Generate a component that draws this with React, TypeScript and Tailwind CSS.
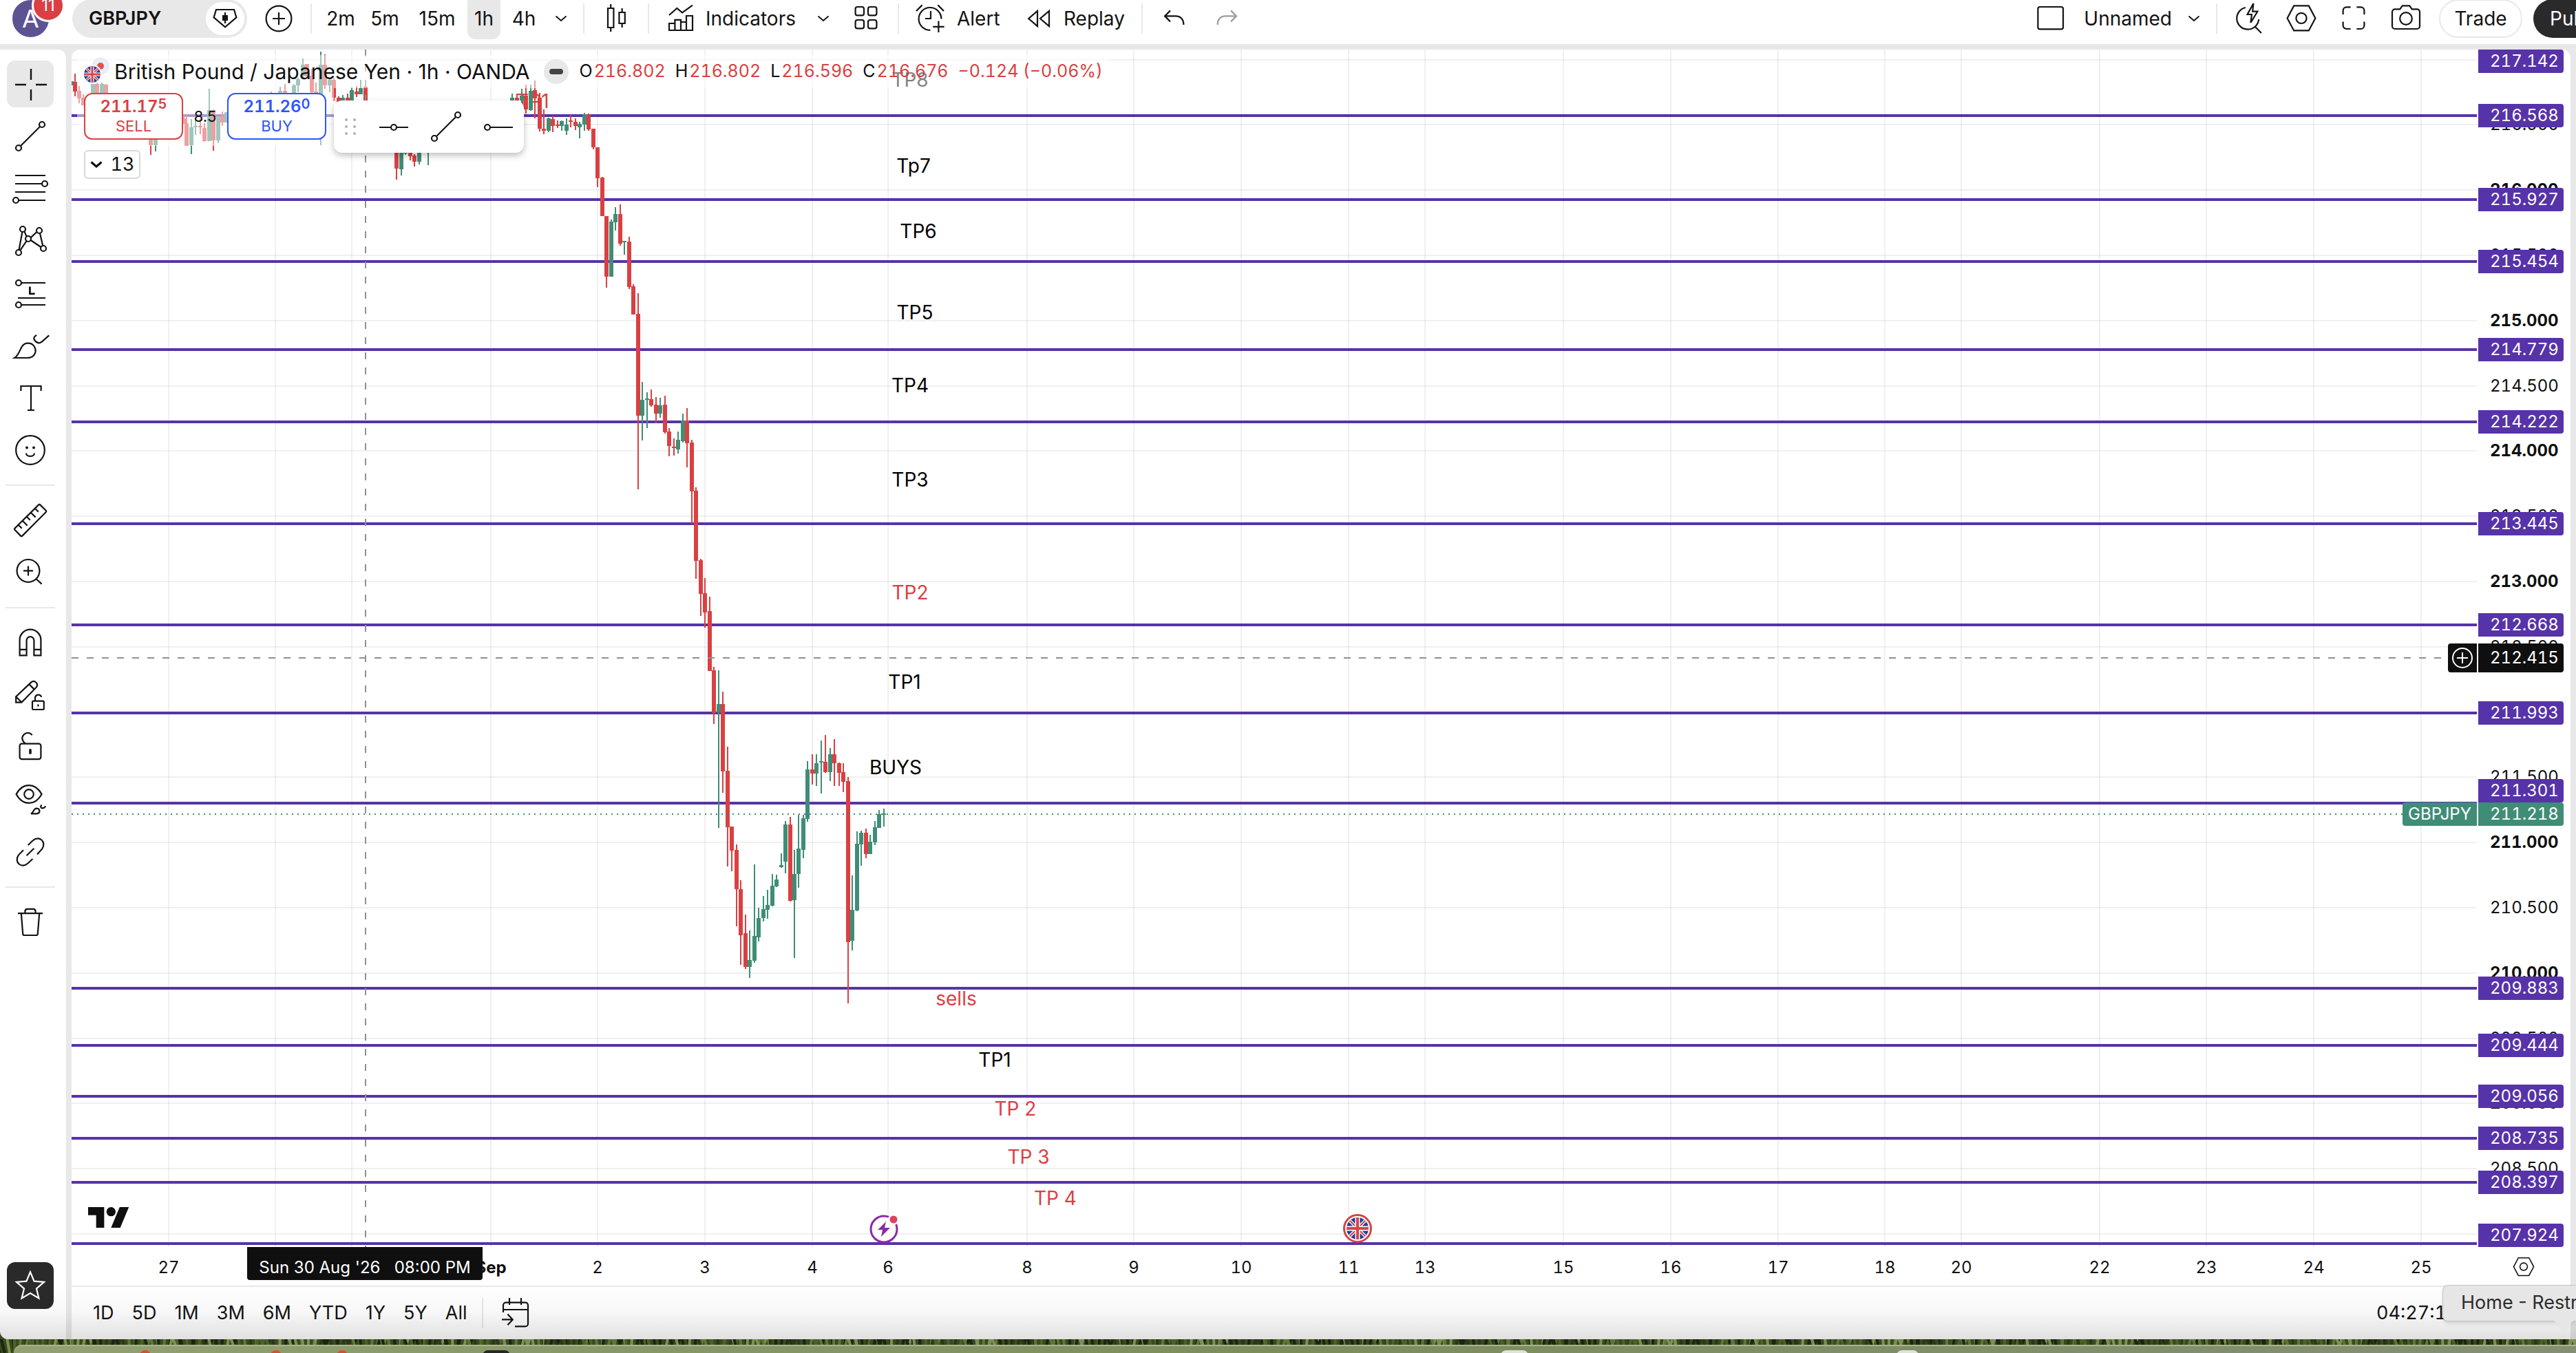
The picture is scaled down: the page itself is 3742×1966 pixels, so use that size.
import React from "react";

type Candle = [x: number, high: number, top: number, bottom: number, low: number, up: 0 | 1];

const PANE_LEFT = 104;
const PANE_TOP = 72;

const priceToY = (price: number) => Math.floor(87 + (217 - price) * 189.6);

const CANDLES: Candle[] = [
  [104, 118, 118, 124, 124, 1], [109, 107, 119, 133, 140, 0], [115, 125, 132, 143, 150, 0], [121, 137, 142, 153, 153, 0],
  [135, 122, 122, 140, 146, 1], [141, 120, 122, 140, 146, 0], [148, 120, 122, 140, 146, 1], [154, 122, 123, 140, 146, 0],
  [219, 190, 190, 211, 225, 0], [226, 190, 190, 211, 220, 1], [267, 168, 172, 180, 180, 0], [271, 168, 179, 212, 212, 0],
  [278, 173, 185, 211, 224, 1], [284, 172, 183, 185, 196, 1], [291, 172, 183, 185, 195, 0], [297, 179, 186, 205, 206, 0],
  [304, 129, 160, 205, 205, 1], [310, 159, 160, 204, 219, 0], [317, 169, 169, 204, 208, 1], [323, 162, 169, 178, 183, 0],
  [329, 163, 163, 178, 178, 1], [394, 133, 138, 142, 142, 0], [407, 126, 132, 142, 142, 1], [414, 122, 132, 142, 142, 0],
  [427, 122, 124, 140, 140, 1], [433, 113, 115, 124, 134, 1], [440, 85, 94, 111, 115, 1], [446, 93, 93, 111, 111, 0],
  [453, 100, 110, 134, 136, 0], [459, 120, 133, 140, 140, 0], [466, 75, 94, 137, 211, 1], [472, 79, 94, 124, 129, 0],
  [479, 113, 116, 124, 134, 1], [485, 114, 116, 142, 147, 0], [492, 140, 142, 148, 148, 0], [498, 138, 142, 148, 148, 1],
  [505, 136, 142, 148, 148, 0], [511, 127, 131, 148, 148, 1], [518, 125, 133, 137, 141, 0], [524, 116, 128, 137, 137, 1],
  [531, 121, 126, 150, 150, 0], [576, 210, 210, 245, 261, 0], [583, 210, 210, 246, 255, 1], [589, 210, 210, 223, 225, 1],
  [596, 210, 210, 227, 233, 0], [602, 224, 226, 235, 242, 0], [609, 210, 210, 235, 239, 1], [622, 210, 210, 212, 240, 1],
  [744, 136, 142, 146, 146, 1], [751, 136, 142, 146, 146, 0], [758, 129, 139, 146, 150, 1], [764, 123, 139, 159, 165, 0],
  [771, 123, 132, 160, 161, 1], [777, 117, 131, 143, 172, 0], [784, 135, 142, 187, 191, 0], [790, 159, 187, 190, 195, 0],
  [797, 171, 172, 190, 192, 1], [803, 168, 173, 183, 192, 0], [810, 175, 181, 183, 186, 0], [816, 175, 176, 183, 190, 1],
  [823, 172, 181, 190, 196, 1], [829, 167, 175, 177, 185, 0], [836, 172, 177, 183, 189, 0], [842, 177, 180, 185, 201, 1],
  [849, 164, 166, 181, 190, 1], [855, 165, 166, 188, 190, 0], [862, 187, 187, 214, 217, 0], [868, 214, 214, 259, 272, 0],
  [875, 257, 258, 314, 314, 0], [881, 314, 314, 402, 418, 0], [888, 319, 322, 402, 402, 1], [894, 301, 311, 323, 335, 1],
  [901, 297, 311, 354, 357, 0], [907, 350, 350, 352, 370, 1], [914, 344, 351, 417, 420, 0], [920, 413, 416, 457, 457, 0],
  [927, 426, 456, 604, 711, 0], [933, 555, 581, 604, 640, 1], [940, 570, 579, 581, 622, 1], [946, 566, 580, 589, 591, 0],
  [953, 577, 588, 601, 615, 0], [959, 578, 589, 601, 607, 1], [966, 575, 588, 628, 630, 0], [972, 622, 627, 648, 663, 0],
  [979, 637, 649, 651, 662, 0], [985, 627, 639, 653, 659, 1], [992, 601, 611, 641, 643, 1], [998, 593, 611, 644, 679, 0],
  [1005, 639, 643, 714, 761, 0], [1011, 708, 713, 815, 841, 0], [1018, 812, 814, 863, 895, 0], [1024, 840, 862, 890, 912, 0],
  [1031, 867, 888, 975, 975, 0], [1037, 969, 974, 1036, 1052, 0], [1044, 974, 1023, 1035, 1203, 1], [1050, 1005, 1023, 1121, 1152, 0],
  [1057, 1085, 1120, 1202, 1259, 0], [1063, 1201, 1201, 1236, 1266, 0], [1070, 1227, 1235, 1292, 1346, 0], [1076, 1279, 1292, 1359, 1402, 0],
  [1083, 1329, 1356, 1405, 1408, 0], [1089, 1352, 1395, 1405, 1421, 1], [1096, 1256, 1360, 1396, 1399, 1], [1102, 1319, 1334, 1362, 1368, 1],
  [1109, 1302, 1321, 1334, 1339, 1], [1115, 1293, 1315, 1322, 1335, 1], [1122, 1270, 1287, 1316, 1317, 1], [1128, 1271, 1278, 1288, 1289, 1],
  [1135, 1240, 1257, 1260, 1261, 1], [1141, 1193, 1198, 1252, 1269, 1], [1148, 1187, 1198, 1309, 1310, 0], [1154, 1235, 1270, 1308, 1392, 1],
  [1160, 1184, 1233, 1270, 1290, 1], [1167, 1184, 1189, 1235, 1247, 1], [1173, 1106, 1118, 1190, 1194, 1], [1180, 1096, 1118, 1124, 1140, 0],
  [1186, 1096, 1109, 1124, 1142, 1], [1193, 1076, 1106, 1108, 1153, 1], [1199, 1068, 1107, 1122, 1123, 0], [1206, 1087, 1096, 1122, 1135, 1],
  [1212, 1074, 1096, 1109, 1142, 0], [1219, 1108, 1109, 1123, 1142, 0], [1225, 1109, 1122, 1136, 1151, 0], [1232, 1129, 1135, 1369, 1458, 0],
  [1238, 1272, 1322, 1367, 1381, 1], [1245, 1208, 1226, 1323, 1324, 1], [1251, 1207, 1210, 1227, 1258, 1], [1258, 1204, 1210, 1241, 1247, 0],
  [1264, 1213, 1223, 1241, 1241, 1], [1271, 1193, 1202, 1224, 1228, 1], [1277, 1177, 1183, 1203, 1203, 1], [1284, 1175, 1182, 1184, 1201, 1],
];

const LEVELS = [
  216.568, 215.927, 215.454, 214.779, 214.222, 213.445, 212.668, 211.993, 211.301, 209.883, 209.444, 209.056, 208.735,
  208.397, 207.924,
];

const TICKS = Array.from({ length: 19 }, (_, i) => 217 - i * 0.5);

const NOTES: { x: number; y: number; text: string; red?: boolean }[] = [
  { x: 1322, y: 126, text: "TP8" },
  { x: 774, y: 157, text: "TP1", red: true },
  { x: 1327, y: 251, text: "Tp7" },
  { x: 1334, y: 346, text: "TP6" },
  { x: 1329, y: 464, text: "TP5" },
  { x: 1322, y: 570, text: "TP4" },
  { x: 1322, y: 707, text: "TP3" },
  { x: 1322, y: 871, text: "TP2", red: true },
  { x: 1314, y: 1001, text: "TP1" },
  { x: 1301, y: 1125, text: "BUYS" },
  { x: 1389, y: 1461, text: "sells", red: true },
  { x: 1445, y: 1550, text: "TP1" },
  { x: 1475, y: 1621, text: "TP 2", red: true },
  { x: 1494, y: 1691, text: "TP 3", red: true },
  { x: 1533, y: 1751, text: "TP 4", red: true },
];

const DAYS: { x: number; label: string; bold?: boolean }[] = [
  { x: 245, label: "27" },
  { x: 400, label: "" },
  { x: 511, label: "" },
  { x: 713, label: "Sep", bold: true },
  { x: 868, label: "2" },
  { x: 1024, label: "3" },
  { x: 1180, label: "4" },
  { x: 1290, label: "6" },
  { x: 1492, label: "8" },
  { x: 1647, label: "9" },
  { x: 1803, label: "10" },
  { x: 1959, label: "11" },
  { x: 2070, label: "13" },
  { x: 2271, label: "15" },
  { x: 2427, label: "16" },
  { x: 2583, label: "17" },
  { x: 2738, label: "18" },
  { x: 2849, label: "20" },
  { x: 3050, label: "22" },
  { x: 3205, label: "23" },
  { x: 3361, label: "24" },
  { x: 3517, label: "25" },
];

function Icon({ children, className = "size-14" }: { children: React.ReactNode; className?: string }) {
  return (
    <svg viewBox="0 0 28 28" fill="none" stroke="currentColor" strokeWidth="1.1" aria-hidden className={`shrink-0 ${className}`}>
      {children}
    </svg>
  );
}

function Chevron({ bold = false }: { bold?: boolean }) {
  return (
    <svg viewBox="0 0 20 12" fill="none" stroke="currentColor" strokeWidth={bold ? 3 : 2} aria-hidden className="h-3 w-5 shrink-0">
      <path d="M2.5 2.5 10 9l7.5-6.5" />
    </svg>
  );
}

function Flag({ className }: { className: string }) {
  return (
    <svg viewBox="0 0 24 24" aria-hidden className={className}>
      <clipPath id="flag-round">
        <circle cx="12" cy="12" r="12" />
      </clipPath>
      <g clipPath="url(#flag-round)">
        <path fill="#1f419b" d="M0 0h24v24H0z" />
        <path stroke="#fff" strokeWidth="3.4" d="m0 0 24 24M24 0 0 24" />
        <path stroke="#d8434a" strokeWidth="1.6" d="m0 0 24 24M24 0 0 24" />
        <path stroke="#fff" strokeWidth="5.2" d="M12 0v24M0 12h24" />
        <path stroke="#d8434a" strokeWidth="3" d="M12 0v24M0 12h24" />
      </g>
    </svg>
  );
}

const Hexagon = () => (
  <>
    <path d="M3.8 13.7 8.6 4.7h10.8l4.8 9-4.8 9H8.6z" />
    <circle cx="14" cy="13.7" r="3.8" />
  </>
);

const Separator = () => <div className="h-11 w-0.5 shrink-0 bg-[#e8e8e8]" />;

function ToolButton({ label, className, children }: { label: string; className: string; children: React.ReactNode }) {
  return (
    <button aria-label={label} className={`flex h-14 shrink-0 items-center justify-center ${className}`}>
      {children}
    </button>
  );
}

function Header() {
  return (
    <header className="flex h-16 shrink-0 items-center bg-white pb-2.5 pl-[18px] text-[28px] text-[#131313]">
      <button aria-label="Account" className="relative flex h-[54px] w-[53px] shrink-0 items-center justify-center rounded-full bg-[#5e5392] text-[36px] text-white">
        A
        <span className="absolute -top-4 left-7 flex size-12 items-center justify-center rounded-full border-[3px] border-white bg-[#da4042] text-[24px]">
          11
        </span>
      </button>
      <div className="ml-[34px] flex h-14 w-[254px] shrink-0 items-center justify-between rounded-full bg-[#e8e8e8] pr-1 pl-6">
        <button className="text-[27px] font-semibold">GBPJPY</button>
        <button aria-label="Symbol details" className="flex h-12 w-14 items-center justify-center rounded-full bg-white">
          <Icon>
            <path d="M7.5 7.5h13l1.7 5.7L14 20.2l-8.2-7z" />
            <path d="M14 9.5v8" />
            <path d="M12 11.5h4v4h-4z" fill="currentColor" stroke="none" />
          </Icon>
        </button>
      </div>
      <ToolButton label="Compare symbols" className="ml-2 w-[76px]">
        <Icon>
          <circle cx="14" cy="14" r="9.2" />
          <path d="M14 9.5v9M9.5 14h9" />
        </Icon>
      </ToolButton>
      <div className="ml-2 flex shrink-0 items-center">
        <Separator />
      </div>
      <nav aria-label="Interval" className="ml-2.5 flex shrink-0 items-center">
        <button className="w-16">2m</button>
        <button className="w-16">5m</button>
        <button className="w-[88px]">15m</button>
        <button className="-mt-2 h-[68px] w-12 rounded-xl bg-[#e8e8e8] pt-2">1h</button>
        <button className="w-[68px]">4h</button>
        <ToolButton label="More intervals" className="w-10">
          <Chevron />
        </ToolButton>
      </nav>
      <div className="ml-3 flex shrink-0 items-center">
        <Separator />
      </div>
      <ToolButton label="Chart style" className="ml-2 w-[76px]">
        <Icon>
          <path d="M8 6.5h4.2v14H8zM10.1 3.5v3M10.1 20.5v3M16.2 9.5h4.2v8h-4.2zM18.3 6.5v3M18.3 17.5v3" />
        </Icon>
      </ToolButton>
      <div className="ml-2 flex shrink-0 items-center">
        <Separator />
      </div>
      <button className="flex w-[229px] shrink-0 items-center gap-2 pl-[18px]">
        <Icon>
          <path d="M5.5 22.5v-5h4.2v-2.6H14v1.6h4V12h4.5v10.5zM9.7 17v5.5M14 16v6.5M18 16v6.5M5.5 11.5l5.7-5 3.8 3.2 7.5-5.4" />
        </Icon>
        Indicators
      </button>
      <ToolButton label="Favorite indicators" className="w-12">
        <Chevron />
      </ToolButton>
      <ToolButton label="Layout templates" className="w-[76px]">
        <Icon>
          <rect x="6.3" y="5.5" width="6.2" height="6.2" rx="1.5" />
          <rect x="15.5" y="5.5" width="6.2" height="6.2" rx="1.5" />
          <rect x="6.3" y="15" width="6.2" height="6.2" rx="1.5" />
          <rect x="15.5" y="15" width="6.2" height="6.2" rx="1.5" />
        </Icon>
      </ToolButton>
      <div className="ml-2 flex shrink-0 items-center">
        <Separator />
      </div>
      <button className="flex w-[166px] shrink-0 items-center gap-2.5 pl-[18px]">
        <Icon>
          <path d="M21.7 14.2a8.2 8.2 0 1 0-8 8.2M14 8.5V14h-4M3.5 8.5l4.3-4.3M23.5 8.5l-4.3-4.3M19.7 15.8v8.2M15.6 19.9h8.2" />
        </Icon>
        Alert
      </button>
      <button className="flex w-[178px] shrink-0 items-center gap-2 pl-[9px]">
        <Icon>
          <path d="M13 8.4v11.2L6.6 14zM21.5 8.4v11.2L15 14z" />
        </Icon>
        Replay
      </button>
      <div className="ml-2 flex shrink-0 items-center">
        <Separator />
      </div>
      <ToolButton label="Undo" className="ml-2 w-[76px]">
        <Icon>
          <path d="m11 8.2-4 4 4 4M7 12.2h8c3.5 0 5.7 2.4 5.7 6.3" />
        </Icon>
      </ToolButton>
      <ToolButton label="Redo" className="w-[76px] text-[#9c9c9c]">
        <Icon>
          <path d="m17 8.2 4 4-4 4M21 12.2h-8c-3.5 0-5.7 2.4-5.7 6.3" />
        </Icon>
      </ToolButton>

      <div className="ml-auto flex shrink-0 items-center">
        <button className="flex shrink-0 items-center gap-5">
          <Icon>
            <rect x="4.7" y="5.5" width="18.3" height="16.2" rx="1.5" />
          </Icon>
          Unnamed
        </button>
        <ToolButton label="Layouts" className="ml-2 w-12">
          <Chevron />
        </ToolButton>
        <div className="mx-2 flex shrink-0 items-center">
          <Separator />
        </div>
        <ToolButton label="Quick search" className="w-[76px]">
          <Icon>
            <path d="M11.5 6a8 8 0 1 0 9.6 8.6M18.5 20l4.5 4.5M17.2 3l-4.4 8h3.2l-.8 6 5-8.2h-3.6z" />
          </Icon>
        </ToolButton>
        <ToolButton label="Settings" className="w-[76px]">
          <Icon>
            <Hexagon />
          </Icon>
        </ToolButton>
        <ToolButton label="Fullscreen" className="w-[76px]">
          <Icon>
            <path d="M6.3 11V8.2a2.5 2.5 0 0 1 2.5-2.5h3M16.2 5.7h3a2.5 2.5 0 0 1 2.5 2.5V11M21.7 16.2V19a2.5 2.5 0 0 1-2.5 2.5h-3M11.8 21.5h-3A2.5 2.5 0 0 1 6.3 19v-2.8" />
          </Icon>
        </ToolButton>
        <ToolButton label="Snapshot" className="w-[76px]">
          <Icon>
            <path d="M4 9.2a2 2 0 0 1 2-2h3.6l1.8-2.5h5.2l1.8 2.5H22a2 2 0 0 1 2 2v10.3a2 2 0 0 1-2 2H6a2 2 0 0 1-2-2z" />
            <circle cx="14" cy="14" r="4.4" />
          </Icon>
        </ToolButton>
        <button className="ml-2.5 h-14 w-[121px] shrink-0 rounded-full border-2 border-[#e8e8e8]">Trade</button>
        <div className="ml-4 w-[62px] shrink-0">
          <button className="h-14 w-[150px] rounded-full bg-[#2a2a2a] pl-6 text-left text-white">Publish</button>
        </div>
      </div>
    </header>
  );
}

const TOOL_GROUPS: { name: string; art: React.ReactNode }[][] = [
  [
    { name: "Cross", art: <path d="M3 14.5h8M18 14.5h8M14.5 3v8M14.5 18v8" strokeWidth="1.2" /> },
    {
      name: "Trend line",
      art: (
        <>
          <circle cx="5.5" cy="22.5" r="2" />
          <circle cx="22.5" cy="5.5" r="2" />
          <path d="M7 21 21 7" />
        </>
      ),
    },
    {
      name: "Fib retracement",
      art: (
        <>
          <path d="M3 4.5h22M3 10.5h19.5M3 16.5h22M5.5 22.5H25" />
          <circle cx="24.5" cy="10.5" r="2" />
          <circle cx="3.5" cy="22.5" r="2" />
        </>
      ),
    },
    {
      name: "XABCD pattern",
      art: (
        <>
          <path d="M8.2 7.5 5.8 20.5M9.7 7.2l1.6 3.6M11.2 14.2l-4.5 6.6M14.3 11.7l4.4-4.2M14.3 13.5l7.4 5M21 8.5l2.1 9" />
          <circle cx="8.5" cy="5.5" r="2" />
          <circle cx="20.5" cy="6.5" r="2" />
          <circle cx="12.5" cy="12.5" r="2" />
          <circle cx="23.5" cy="19.5" r="2" />
          <circle cx="5.5" cy="22.5" r="2" />
        </>
      ),
    },
    {
      name: "Long position",
      art: (
        <>
          <path d="M7.5 6.5H25M5 17.5h20M7.5 22.5H25" />
          <path d="M13.7 9.2v5.2h3.6" strokeWidth="1.4" />
          <circle cx="5.5" cy="6.5" r="2" />
          <circle cx="5.5" cy="22.5" r="2" />
        </>
      ),
    },
    {
      name: "Brush",
      art: (
        <path d="M2.6 23c3-1.8 3.6-5.6 5.4-8.3 2.2-3.2 6.6-3 8.6-.4 2.6 3.6.8 8.7-4.6 8.7zM18.6 6.5c-2.2 1-2.4 2.6-1.2 4 1.4 1.7 3.2 2.2 5 .8l5.2-4.6" />
      ),
    },
    { name: "Text", art: <path d="M7.2 9V5.5h14.6V9M14.5 5.5V23M12 23h5" /> },
    {
      name: "Emoji",
      art: (
        <>
          <circle cx="14" cy="14" r="10.4" />
          <path d="M11 16.2c0 3 6 3 6 0" />
          <circle cx="11.5" cy="12.3" r="1" fill="currentColor" stroke="none" />
          <circle cx="16.5" cy="12.3" r="1" fill="currentColor" stroke="none" />
        </>
      ),
    },
  ],
  [
    {
      name: "Measure",
      art: (
        <path
          d="M2.8 19.8 20 2.8q.6-.6 1.2 0l4.1 4.1q.6.6 0 1.2L8.2 25.3q-.6.6-1.2 0L2.8 21q-.6-.6 0-1.2zM5.5 17.5l2.4 2.4M8.5 14.5l3.3 3.3M11.5 11.5l2.4 2.4M14.5 8.5l3.3 3.3M17.5 5.5l2.4 2.4"
          strokeLinejoin="round"
        />
      ),
    },
    {
      name: "Zoom in",
      art: (
        <>
          <circle cx="12.5" cy="12.7" r="8.2" />
          <path d="M12.5 9.2v7M9 12.7h7M18.3 18.6l4 3.7" />
        </>
      ),
    },
  ],
  [
    {
      name: "Magnet",
      art: <path d="M6.3 23.2V12a7.7 7.7 0 0 1 15.4 0v11.2h-5V12.3a2.7 2.7 0 0 0-5.4 0v10.9zM6.3 18.9h5M16.7 18.9h5" />,
    },
    {
      name: "Stay in drawing mode",
      art: (
        <>
          <path d="M3.6 19.3v-4.2L14.8 4.6c2.2-1.8 5.4 1 3.7 3.6L7.7 19.3zM3.6 15.1l4.1 4.2M13.2 6.2l4 4" />
          <rect x="15.5" y="18.3" width="8.4" height="6.2" rx=".8" />
          <path d="M17.5 18.3v-2c0-3.2 4.5-3.2 4.5-.8M19.7 20.7v1.6" />
        </>
      ),
    },
    {
      name: "Lock all drawings",
      art: (
        <>
          <rect x="6.3" y="11.3" width="15.4" height="11.3" rx="1.6" />
          <path d="M10.4 11.2C7.6 9 7.6 6.6 9.3 4.8c1.7-1.8 4.8-1.8 6 .3" />
          <rect x="13.1" y="15" width="1.8" height="4" rx=".9" fill="currentColor" stroke="none" />
        </>
      ),
    },
    {
      name: "Hide all drawings",
      art: (
        <>
          <path d="M3.8 10C8.5 1.4 17.5 1.4 22.3 10c-4.8 8.6-13.8 8.6-18.5 0z" />
          <circle cx="13" cy="10" r="3.4" />
          <path d="M14.5 24.2c1.6-.8 1.7-2.4 2.7-3.3 1.4-1.2 3.7-.3 3.5 1.6-.2 1.2-1.2 1.7-2.4 1.7zM22.3 17.8c-1.2.9-.8 2.3.4 2.4.9 0 1.7-.6 2.5-1.5" />
        </>
      ),
    },
    {
      name: "Link drawings",
      art: (
        <path d="m12.4 9 3.2-3.1c4.9-4.5 10.4.9 7 5.8L19 15.8M15.7 19l-3.3 3.1c-4.9 4.5-10.4-.9-7-5.8L9 12.6M11.3 16.6l5.4-5.2" />
      ),
    },
  ],
  [
    {
      name: "Remove objects",
      art: <path d="M5 7.6h18M10.2 7.6V6.2c0-1.2.6-1.8 1.6-1.8h4.4c1 0 1.6.6 1.6 1.8v1.4M7.4 7.6l1.2 14.8q.1 1.1 1.2 1.1h8.4q1.1 0 1.2-1.1l1.2-14.8" />,
    },
  ],
];

function Sidebar() {
  return (
    <aside className="flex w-24 shrink-0 flex-col rounded-tr-xl rounded-bl-xl bg-white pt-3 pb-11 text-[#131313]">
      {TOOL_GROUPS.map((group, g) => (
        <div key={g} className="flex flex-col">
          {g > 0 && <div className="my-3 ml-2 h-0.5 w-[72px] bg-[#e8e8e8]" />}
          {group.map((tool) => (
            <div key={tool.name} className="flex h-[76px] w-[88px] items-center justify-center">
              <button
                aria-label={tool.name}
                className={`flex size-[68px] items-center justify-center rounded-xl ${tool.name === "Cross" ? "bg-[#e8e8e8]" : ""}`}
              >
                <Icon>{tool.art}</Icon>
              </button>
            </div>
          ))}
        </div>
      ))}
      <button aria-label="Favorites" className="mt-auto ml-2.5 flex size-[68px] items-center justify-center rounded-xl bg-[#2a2a2a] text-white">
        <Icon>
          <path d="m14 4.2 2.8 6.6 7.2.6-5.5 4.8 1.7 7L14 19.5l-6.2 3.7 1.7-7L4 11.4l7.2-.6z" />
        </Icon>
      </button>
    </aside>
  );
}

function PriceChart() {
  return (
    <svg className="absolute inset-0 size-full" role="img" aria-label="GBPJPY hourly candles">
      <g transform={`translate(${-PANE_LEFT} ${-PANE_TOP})`}>
        <g fill="#000" fillOpacity=".06">
          {TICKS.map((p) => (
            <rect key={p} x="0" y={priceToY(p) - 1} width="9999" height="2" />
          ))}
          {DAYS.map((d) => (
            <rect key={d.x} x={d.x - 1} y="0" width="2" height="9999" />
          ))}
        </g>
        <g fill="#5733a9">
          {LEVELS.map((p) => (
            <rect key={p} x="0" y={priceToY(p) - 2} width="9999" height="4" />
          ))}
        </g>
        <g fontSize="28" textAnchor="middle">
          {NOTES.map((n) => (
            <text key={n.text + n.y} x={n.x} y={n.y} fill={n.red ? "#da4042" : "#000"}>
              {n.text}
            </text>
          ))}
        </g>
        {CANDLES.map(([x, high, top, bottom, low, up]) => (
          <g key={x} fill={up ? "#408d77" : "#da4042"}>
            <rect x={x - 1} y={high} width="2" height={low - high} />
            <rect x={x - 3} y={top} width="6" height={bottom - top} />
          </g>
        ))}
        <path d="M104 1183H9999" stroke="#408d77" strokeWidth="2" strokeDasharray="2 6" />
        <path d="M104 956H9999M531 72V9999" stroke="#909090" strokeWidth="2" strokeDasharray="10 12" />
      </g>
    </svg>
  );
}

function Quote({ label, value }: { label: string; value: string }) {
  return (
    <span>
      {label}
      <span className="ml-0.5 text-[#da4042] tabular-nums">{value}</span>
    </span>
  );
}

function Legend() {
  return (
    <div className="absolute top-2 left-2 flex flex-col items-start text-[#0f0f0f]">
      <div className="flex h-12 items-center bg-white/50 pr-3 pl-2.5">
        <div className="relative h-9 w-9">
          <span className="absolute -top-0.5 left-3 flex size-6 items-center justify-center rounded-full border border-[#d9dcec] bg-[#eceef8]">
            <span className="size-2.5 rounded-full bg-[#e05252]" />
          </span>
          <span className="absolute top-2 -left-0.5 rounded-full border-2 border-white">
            <Flag className="size-6" />
          </span>
        </div>
        <button className="ml-2 text-[30px] whitespace-nowrap">British Pound / Japanese Yen · 1h · OANDA</button>
        <button aria-label="Market status" className="ml-5 flex size-9 items-center justify-center rounded-full bg-[#e8e8e8]">
          <span className="h-2 w-5 rounded-full bg-[#444]" />
        </button>
        <div className="ml-4 flex items-center gap-3.5 text-[25px] whitespace-nowrap">
          <Quote label="O" value="216.802" />
          <Quote label="H" value="216.802" />
          <Quote label="L" value="216.596" />
          <Quote label="C" value="216.676" />
          <span className="text-[#da4042] tabular-nums">−0.124 (−0.06%)</span>
        </div>
      </div>
      <div className="flex h-[84px] items-center bg-white/50 pr-[11px] pb-0.5 pl-2.5">
        <button className="flex h-[68px] w-36 flex-col items-center justify-center rounded-xl border-2 border-[#da4042] bg-white text-[22px] leading-7 text-[#da4042]">
          <span className="flex text-[24px] font-semibold tabular-nums">
            211.17<span className="-mt-1 text-[20px]">5</span>
          </span>
          SELL
        </button>
        <span className="w-16 text-center text-[22px]">8.5</span>
        <button className="flex h-[68px] w-36 flex-col items-center justify-center rounded-xl border-2 border-[#2f55ff] bg-white text-[22px] leading-7 text-[#2f55ff]">
          <span className="flex text-[24px] font-semibold tabular-nums">
            211.26<span className="-mt-1 text-[20px]">0</span>
          </span>
          BUY
        </button>
      </div>
      <button className="mt-1.5 ml-2.5 flex h-[42px] w-[82px] items-center justify-center gap-2.5 rounded-md border-2 border-[#d8d8d8] bg-white text-[27px] tabular-nums">
        <Chevron bold />
        13
      </button>
    </div>
  );
}

function FavoritesToolbar() {
  return (
    <div className="absolute top-[74px] left-[381px] flex h-[76px] w-[276px] items-center rounded-xl bg-white text-[#131313] shadow-[0_4px_10px_rgba(0,0,0,0.25)]">
      <div className="grid w-12 grid-cols-[4px_4px] gap-x-2 gap-y-1.5 pl-4">
        {Array.from({ length: 6 }, (_, i) => (
          <span key={i} className="size-1 rounded-full bg-[#b0b0b0]" />
        ))}
      </div>
      <ToolButton label="Horizontal line" className="w-[78px]">
        <Icon>
          <path d="M3.5 14.5H12M16 14.5h8.5" />
          <circle cx="14" cy="14.5" r="2" />
        </Icon>
      </ToolButton>
      <ToolButton label="Trend line" className="w-[74px]">
        <Icon>
          <circle cx="5.5" cy="22.5" r="2" />
          <circle cx="22.5" cy="5.5" r="2" />
          <path d="M7 21 21 7" />
        </Icon>
      </ToolButton>
      <ToolButton label="Horizontal ray" className="w-[76px]">
        <Icon>
          <path d="M8.5 14.5H25" />
          <circle cx="6.5" cy="14.5" r="2" />
        </Icon>
      </ToolButton>
    </div>
  );
}

function PriceTag({ y, color, children, tall = false }: { y: number; color: string; children: string; tall?: boolean }) {
  return (
    <div
      className={`absolute left-0.5 flex w-[124px] -translate-y-1/2 items-center rounded-r pl-[17px] text-white ${tall ? "h-[42px]" : "h-[34px]"} ${color}`}
      style={{ top: y - PANE_TOP }}
    >
      {children}
    </div>
  );
}

function PriceAxis() {
  const tagY = (p: number) => (p === 211.301 ? 1149 : p === 207.924 ? 1795 : priceToY(p));
  return (
    <div className="relative w-[136px] shrink-0 text-[24px] leading-8 text-[#0f0f0f] tabular-nums">
      {TICKS.map((p) => (
        <div
          key={p}
          className={`absolute left-[19px] -translate-y-1/2 ${Number.isInteger(p) ? "font-bold" : ""}`}
          style={{ top: priceToY(p) - PANE_TOP }}
        >
          {p.toFixed(3)}
        </div>
      ))}
      <PriceTag y={89} color="bg-[#5733a9]">
        217.142
      </PriceTag>
      {LEVELS.map((p) => (
        <PriceTag key={p} y={tagY(p)} color="bg-[#5733a9]">
          {p.toFixed(3)}
        </PriceTag>
      ))}
      <PriceTag y={956} color="bg-[#0f0f0f]" tall>
        212.415
      </PriceTag>
      <PriceTag y={1183} color="bg-[#408d77]">
        211.218
      </PriceTag>
    </div>
  );
}

function ChartPanel() {
  return (
    <main className="flex min-w-0 flex-1 flex-col overflow-hidden rounded-t-xl bg-white">
      <div className="flex min-h-0 flex-1">
        <div className="relative min-w-0 flex-1 overflow-hidden">
          <PriceChart />
          <Legend />
          <FavoritesToolbar />
          <svg viewBox="0 4 36 18" fill="#0f0f0f" aria-label="TradingView" className="absolute bottom-7 left-6 h-[30px] w-[60px]">
            <path d="M14 22H7V11H0V4h14zM28 22h-8l7.5-18h8z" />
            <circle cx="20" cy="8" r="4" />
          </svg>
          <button aria-label="Latest updates" className="absolute bottom-1 left-[1158px] size-11">
            <svg viewBox="0 0 44 44" fill="none">
              <circle cx="22" cy="22" r="19" fill="#fff" stroke="#8a2aa8" strokeWidth="3" />
              <path d="m25 11-12 12h7l-2 10 13-13h-8z" fill="#8a2aa8" />
              <circle cx="36" cy="8" r="8" fill="#fff" />
              <circle cx="36" cy="8" r="5.5" fill="#e0405a" />
            </svg>
          </button>
          <button aria-label="United Kingdom event" className="absolute bottom-1.5 left-[1847px] flex size-[42px] items-center justify-center rounded-full border-[3px] border-[#da4042] bg-white">
            <Flag className="size-8" />
          </button>
          <button aria-label="Add alert on price" className="absolute top-[863px] right-0 flex h-[42px] w-[42px] items-center justify-center rounded-l bg-[#0f0f0f] text-white">
            <svg viewBox="0 0 32 32" fill="none" stroke="currentColor" strokeWidth="2" className="size-8">
              <circle cx="16" cy="16" r="14" />
              <path d="M16 8v16M8 16h16" />
            </svg>
          </button>
          <div className="absolute top-[1094px] right-0 flex h-[34px] w-[108px] items-center justify-center rounded-l bg-[#408d77] text-[24px] text-white">
            GBPJPY
          </div>
        </div>
        <PriceAxis />
      </div>

      <div className="flex h-14 shrink-0 text-[24px] text-[#0f0f0f]">
        <div className="relative min-w-0 flex-1 overflow-hidden">
          {DAYS.map((d) => (
            <span
              key={d.x}
              className={`absolute top-3 -translate-x-1/2 tabular-nums ${d.bold ? "font-bold" : ""}`}
              style={{ left: d.x - PANE_LEFT }}
            >
              {d.label}
            </span>
          ))}
          <div className="absolute top-0 left-[255px] flex h-12 w-[342px] items-center justify-center rounded-b bg-[#0f0f0f] pt-3 whitespace-pre text-white">
            {"Sun 30 Aug '26   08:00 PM"}
          </div>
        </div>
        <button aria-label="Axis settings" className="flex w-[136px] shrink-0 items-center justify-center pt-0.5">
          <Icon className="size-10">
            <Hexagon />
          </Icon>
        </button>
      </div>

      <div className="flex h-[78px] shrink-0 items-center border-t-2 border-[#e8e8e8] pl-[18px] text-[27px] text-[#131313]">
        {["1D", "5D", "1M", "3M", "6M", "YTD", "1Y", "5Y", "All"].map((range) => (
          <button key={range} className="px-[13px]">
            {range}
          </button>
        ))}
        <div className="mx-2 flex">
          <Separator />
        </div>
        <ToolButton label="Go to date" className="w-[76px]">
          <Icon>
            <path d="M5.5 13.5V8.3a2 2 0 0 1 2-2h14a2 2 0 0 1 2 2v13.4a2 2 0 0 1-2 2H14M5.5 11.5h18M10 3v5M18.5 3v5M4.5 18.7h7.5M8.7 14.8l3.7 3.9-3.7 3.9" />
          </Icon>
        </ToolButton>
        <button className="mr-[176px] ml-auto w-[106px] overflow-hidden text-left whitespace-nowrap tabular-nums">04:27:1</button>
      </div>
    </main>
  );
}

const BLADES = Array.from({ length: 760 }, (_, i) => ({
  x: i * 5 + ((i * 37) % 7),
  lean: ((i * 53) % 17) - 8,
  tone: ["#1c2511", "#4c6228", "#7d9152", "#2b3818", "#5f7736", "#1c2511"][(i * 29 + ((i * i) % 11)) % 6],
}));

function Desktop() {
  return (
    <footer className="relative h-5 shrink-0 overflow-hidden">
      <svg className="absolute inset-0 size-full" aria-hidden>
        {BLADES.map((b, i) => (
          <path key={i} d={`M${b.x} 20L${b.x + b.lean} -2`} stroke={b.tone} strokeWidth="4" />
        ))}
      </svg>
      <div className="absolute top-2 right-0 left-5 h-3 overflow-hidden rounded-tl-2xl border-t-2 border-[#a9b58c] bg-linear-to-r from-[#93a172] via-[#7c8d5c] to-[#848f74]">
        <span className="absolute top-1.5 left-[183px] size-4 rounded-full bg-[#e04a35]" />
        <span className="absolute top-1.5 left-[373px] size-4 rounded-full bg-[#e04a35]" />
        <span className="absolute top-1.5 left-[469px] size-4 rounded-full bg-[#e04a35]" />
        <span className="absolute top-1.5 left-[681px] h-4 w-10 rounded-lg bg-[#262626]" />
        <span className="absolute top-1.5 left-[2160px] h-4 w-10 rounded-lg bg-[#dfe3da]" />
        <span className="absolute top-1.5 left-[2735px] h-4 w-8 rounded-lg bg-[#dfe3da]" />
      </div>
    </footer>
  );
}

export default function App() {
  return (
    <div className="relative flex h-screen flex-col overflow-hidden bg-[#3a4a20] font-['Inter',sans-serif]">
      <div className="relative flex min-h-0 flex-1 flex-col overflow-hidden rounded-bl-xl bg-[#e8e8e8]">
        <Header />
        <div className="flex min-h-0 flex-1 gap-2 pt-2 pr-2">
          <Sidebar />
          <ChartPanel />
        </div>
        <div className="pointer-events-none absolute right-0 bottom-0 left-0 h-20 bg-linear-to-b from-transparent via-black/3 to-black/12" />
      </div>
      <Desktop />
      <div role="tooltip" className="absolute right-0 bottom-[46px] flex h-[53px] w-[194px] items-center rounded-l-lg border border-r-0 border-[#c4c4c4] bg-[#e6e6e6] pl-[26px] text-[27px] whitespace-nowrap text-[#2c2c2c] shadow-md">
        <span className="w-full overflow-hidden">Home - Restr</span>
        <svg viewBox="0 0 36 20" aria-hidden className="absolute -bottom-[19px] left-[157px] h-5 w-9">
          <path d="M0 0c9 0 12 18 18 18S27 0 36 0z" fill="#e6e6e6" />
        </svg>
      </div>
    </div>
  );
}
